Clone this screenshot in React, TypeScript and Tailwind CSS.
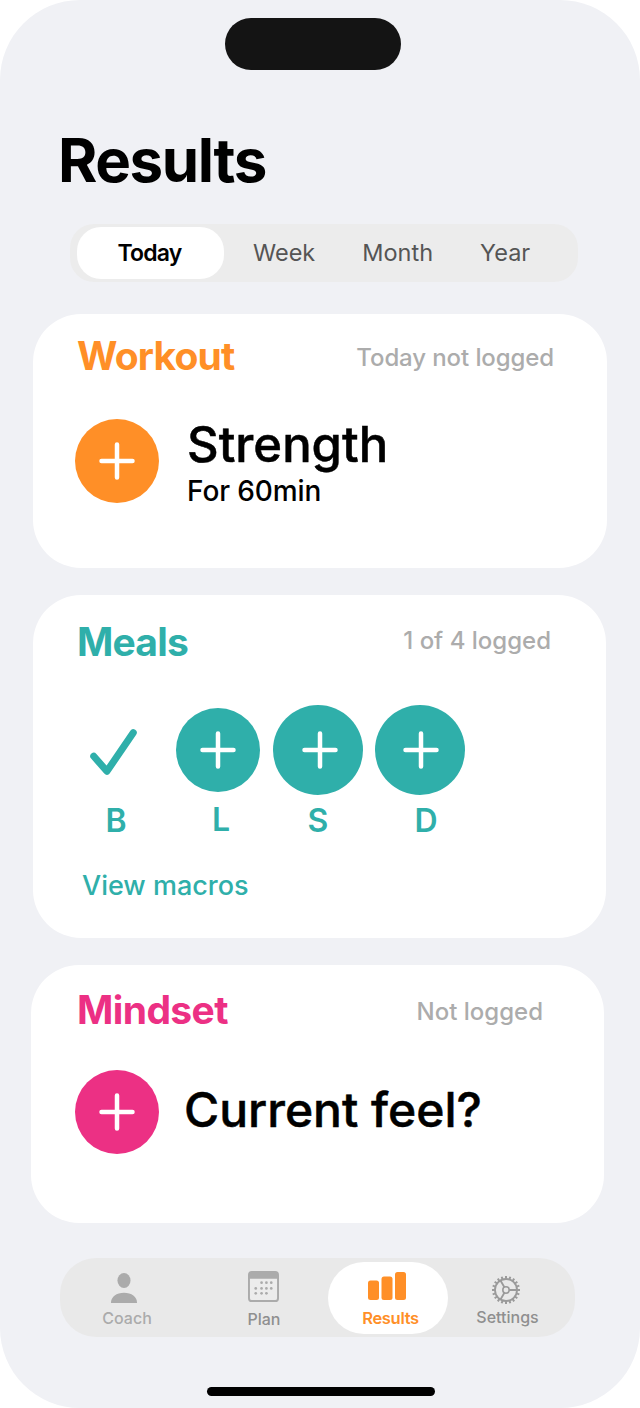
import React from 'react';

const Plus = ({ size = 84, color, className = '' }: { size?: number; color: string; className?: string }) => (
    <div className={`${color} rounded-full flex items-center justify-center shrink-0`} style={{ width: size, height: size }}>
        <svg width="36" height="38" viewBox="0 0 36 38" fill="none" stroke="white" strokeWidth="4.500" strokeLinecap="round" className={className}>
            <path d="M18 2.500V35.500M2.500 19H33.500" />
        </svg>
    </div>
);

const Card = ({ className, children }: { className: string; children: React.ReactNode }) => (
    <div className={`bg-white rounded-[48px] ${className}`}>{children}</div>
);

const PersonIcon = () => (
    <svg width="28" height="30" viewBox="0 0 30 32" fill="#ababab" className="-translate-x-[3px]">
        <ellipse cx="15" cy="8" rx="7" ry="8" />
        <path d="M1 32c0-7 6-11 14-11s14 4 14 11z" />
    </svg>
);

const CalendarIcon = () => {
    const dots = [
        [14, 12], [19, 12], [24, 12],
        [8, 18], [14, 18], [19, 18], [24, 18],
        [8, 23], [14, 23], [19, 23],
    ];
    return (
        <svg width="33" height="31" viewBox="0 0 32 32" className="-translate-x-[1px]">
            <rect x="1" y="1" width="30" height="30" rx="3" fill="#ececec" stroke="#ababab" strokeWidth="2" />
            <path d="M1 4a3 3 0 0 1 3-3h24a3 3 0 0 1 3 3v4H1z" fill="#ababab" />
            {dots.map(([x, y]) => <circle key={`${x}-${y}`} cx={x} cy={y} r="1.400" fill="#ababab" />)}
        </svg>
    );
};

const BarsIcon = () => (
    <svg width="38" height="28" viewBox="0 0 38 28" fill="#ff8f27" className="-translate-x-[4px]">
        <rect x="0" y="8.500" width="11" height="19.500" rx="2.500" />
        <rect x="13.500" y="4.500" width="11" height="23.500" rx="2.500" />
        <rect x="27" y="0" width="11" height="28" rx="2.500" />
    </svg>
);

const GearIcon = () => {
    const teeth = Array.from({ length: 20 }, (_, i) => i * 18);
    return (
        <svg width="28" height="30" viewBox="0 0 28 30" fill="none" stroke="#9a9a9a" className="-translate-x-[2px]">
            <g transform="translate(14 15)">
                <circle r="11" strokeWidth="1.800" />
                {teeth.map((deg) => (
                    <path key={deg} d="M0 -11V-14" strokeWidth="2" transform={`rotate(${deg})`} />
                ))}
                <circle r="3.200" strokeWidth="1.600" />
                <path d="M3.200 0H11M-1.600 -2.800L-5.500 -9.500M-1.600 2.800L-5.500 9.500" strokeWidth="1.800" />
            </g>
        </svg>
    );
};

const MealCol = ({ label, labelClass, children }: { label: string; labelClass: string; children: React.ReactNode }) => (
    <div className="flex flex-col items-center">
        <div className="h-[90px] flex items-center">{children}</div>
        <span className={`mt-[7px] text-[32px] leading-[38px] font-semibold text-[#2fafaa] ${labelClass}`}>{label}</span>
    </div>
);

export default function App() {
    return (
        <div className="w-[640px] h-[1408px] bg-white overflow-hidden" style={{ fontFamily: 'Inter, "Liberation Sans", sans-serif' }}>
            <div className="w-full h-full bg-[#f0f1f5] rounded-[80px] flex flex-col">
                {/* dynamic island */}
                <div className="mt-[18px] ml-[225px] w-[176px] h-[52px] bg-[#141414] rounded-[26px]" />

                <h1 className="mt-[78px] ml-[58px] text-[60px] leading-[24px] h-[24px] font-bold text-black tracking-[-1.400px]">Results</h1>

                {/* range tabs */}
                <div className="mt-[52px] ml-[70px] w-[508px] h-[58px] bg-[#ececec] rounded-[24px] flex items-center pl-[7px] text-[23.500px] text-[#555555]">
                    <div className="w-[147px] h-[52px] bg-white rounded-[24px] flex items-center justify-center pr-[2px] text-black font-semibold text-[23px] tracking-[-0.800px]">Today</div>
                    <span className="ml-[29px]">Week</span>
                    <span className="ml-[47px]">Month</span>
                    <span className="ml-[47px]">Year</span>
                </div>

                {/* workout */}
                <Card className="mt-[32px] ml-[33px] w-[574px] h-[254px] pt-[18px] pl-[42px]">
                    <div className="flex items-center justify-between pr-[53px]">
                        <span className="ml-[2px] text-[39px] leading-[48px] font-bold text-[#ff8f27] tracking-[-0.800px]">Workout</span>
                        <span className="mt-[4px] text-[24px] font-medium text-[#acacac] tracking-[-0.100px]">Today not logged</span>
                    </div>
                    <div className="mt-[33px] flex items-center gap-[28px]">
                        <Plus color="bg-[#ff8f27]" />
                        <div className="flex flex-col mt-[4px]">
                            <span className="text-[49px] leading-[56px] font-medium text-black [-webkit-text-stroke:0.5px_#000]">Strength</span>
                            <span className="text-[28px] leading-[36px] font-medium text-black tracking-[-0.100px]">For 60min</span>
                        </div>
                    </div>
                </Card>

                {/* meals */}
                <Card className="mt-[27px] ml-[33px] w-[573px] h-[343px] pt-[23px] pl-[45px]">
                    <div className="flex items-center justify-between pr-[55px]">
                        <span className="-ml-px text-[39px] leading-[48px] font-bold text-[#2fafaa] tracking-[-0.800px]">Meals</span>
                        <span className="-mt-[2px] text-[24px] font-medium text-[#acacac]">1 of 4 logged</span>
                    </div>
                    <div className="mt-[39px] flex items-start">
                        <div className="w-[76px]">
                            <MealCol label="B" labelClass="">
                                <svg width="47" height="47" viewBox="0 0 50 50" fill="none" stroke="#2fafaa" strokeWidth="7.500" strokeLinecap="round" strokeLinejoin="round" className="mt-[5px] -translate-x-[3px]">
                                    <path d="M4 29L18 45L46 4" />
                                </svg>
                            </MealCol>
                        </div>
                        <div className="ml-[22px] w-[84px]">
                            <MealCol label="L" labelClass="translate-x-[3px] -translate-y-px">
                                <Plus color="bg-[#2fafaa]" />
                            </MealCol>
                        </div>
                        <div className="ml-[13px] w-[90px]">
                            <MealCol label="S" labelClass="">
                                <Plus size={90} color="bg-[#2fafaa]" className="translate-x-[2px]" />
                            </MealCol>
                        </div>
                        <div className="ml-[12px] w-[90px]">
                            <MealCol label="D" labelClass="translate-x-[6px]">
                                <Plus size={90} color="bg-[#2fafaa]" className="translate-x-px" />
                            </MealCol>
                        </div>
                    </div>
                    <div className="mt-[28px] ml-[4px] text-[27px] leading-[36px] font-medium text-[#2fafaa]">View macros</div>
                </Card>

                {/* mindset */}
                <Card className="mt-[27px] ml-[31px] w-[573px] h-[258px] pt-[21px] pl-[47px]">
                    <div className="flex items-center justify-between pr-[61px]">
                        <span className="-ml-px text-[39px] leading-[48px] font-bold text-[#ec3084] tracking-[-0.600px]">Mindset</span>
                        <span className="mt-[4px] text-[24px] font-medium text-[#acacac]">Not logged</span>
                    </div>
                    <div className="mt-[36px] -ml-[3px] flex items-center gap-[25px]">
                        <Plus color="bg-[#ec3084]" />
                        <span className="text-[48px] leading-[56px] font-medium text-black -mt-[4px] [-webkit-text-stroke:0.5px_#000]">Current feel?</span>
                    </div>
                </Card>

                {/* tab bar */}
                <div className="mt-[35px] ml-[60px] w-[515px] h-[79px] bg-[#e9e9e9] rounded-[36px] flex items-start">
                    <div className="w-[134px] pt-[15px] flex flex-col items-center">
                        <PersonIcon />
                        <span className="mt-[5px] text-[16px] leading-[20px] font-medium text-[#ababab]">Coach</span>
                    </div>
                    <div className="ml-[5px] w-[130px] pt-[13px] flex flex-col items-center">
                        <CalendarIcon />
                        <span className="mt-[7px] text-[16px] leading-[20px] font-medium text-[#8f8f8f]">Plan</span>
                    </div>
                    <div className="mt-[4px] w-[120px] h-[72px] -ml-[1px] bg-white rounded-[36px] pt-[10px] pl-[5px] flex flex-col items-center">
                        <BarsIcon />
                        <span className="mt-[8px] text-[16.500px] leading-[20px] font-semibold text-[#ff8f27] tracking-[-0.300px]">Results</span>
                    </div>
                    <div className="flex-1 pt-[17px] pr-[8px] flex flex-col items-center">
                        <GearIcon />
                        <span className="mt-[2px] text-[16px] leading-[20px] font-medium text-[#8f8f8f]">Settings</span>
                    </div>
                </div>

                {/* home indicator */}
                <div className="mt-[50px] ml-[207px] w-[228px] h-[9px] bg-black rounded-full" />
            </div>
        </div>
    );
}
